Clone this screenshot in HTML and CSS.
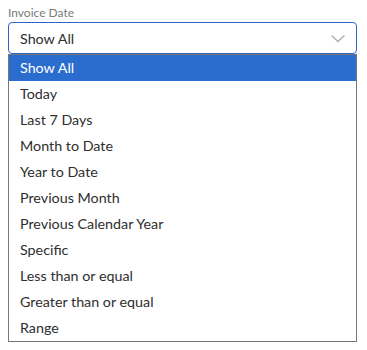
FILE: index.html
```html
<!DOCTYPE html>
<html lang="en">
<head>
    <title>Invoice Date</title>
    <link rel="stylesheet" href="styles.css">
</head>
<body>
<div class="field">
    <label class="field_label">Invoice Date</label>
    <div class="select_box">
        <span class="select_value">Show All</span>
        <svg class="chevron" width="16" height="9" viewBox="0 0 16 9">
            <path d="M1.5 1.5 L8 7.5 L14.5 1.5" fill="none" stroke="#b0b0b0" stroke-width="1.5"/>
        </svg>
    </div>
    <ul class="options">
        <li class="option selected">Show All</li>
        <li class="option">Today</li>
        <li class="option">Last 7 Days</li>
        <li class="option">Month to Date</li>
        <li class="option">Year to Date</li>
        <li class="option">Previous Month</li>
        <li class="option">Previous Calendar Year</li>
        <li class="option">Specific</li>
        <li class="option">Less than or equal</li>
        <li class="option">Greater than or equal</li>
        <li class="option">Range</li>
    </ul>
</div>
</body>
</html>
```
FILE: styles.css
```css
body {
    margin: 0;
    padding: 4px 10px 0 8px;
    font-family: Lato, "Open Sans", sans-serif;
    color: #2e2e2e;
    background: #ffffff;
}

.field {
    display: flex;
    flex-direction: column;
}

.field_label {
    font-size: 12px;
    line-height: 17px;
    color: #7a7a7a;
    height: 18px;
}

.select_box {
    display: flex;
    align-items: center;
    justify-content: space-between;
    height: 30px;
    border: 1px solid #2b67c6;
    border-radius: 4px;
    padding: 0 10px 0 11px;
}

.select_value {
    font-size: 14.3px;
}

.options {
    list-style: none;
    margin: 0;
    padding: 0;
    border: 1px solid #767676;
}

.option {
    height: 26px;
    line-height: 26px;
    padding-left: 11px;
    font-size: 14.3px;
}

.option.selected {
    background: #2b6dcf;
    color: #ffffff;
}
```
